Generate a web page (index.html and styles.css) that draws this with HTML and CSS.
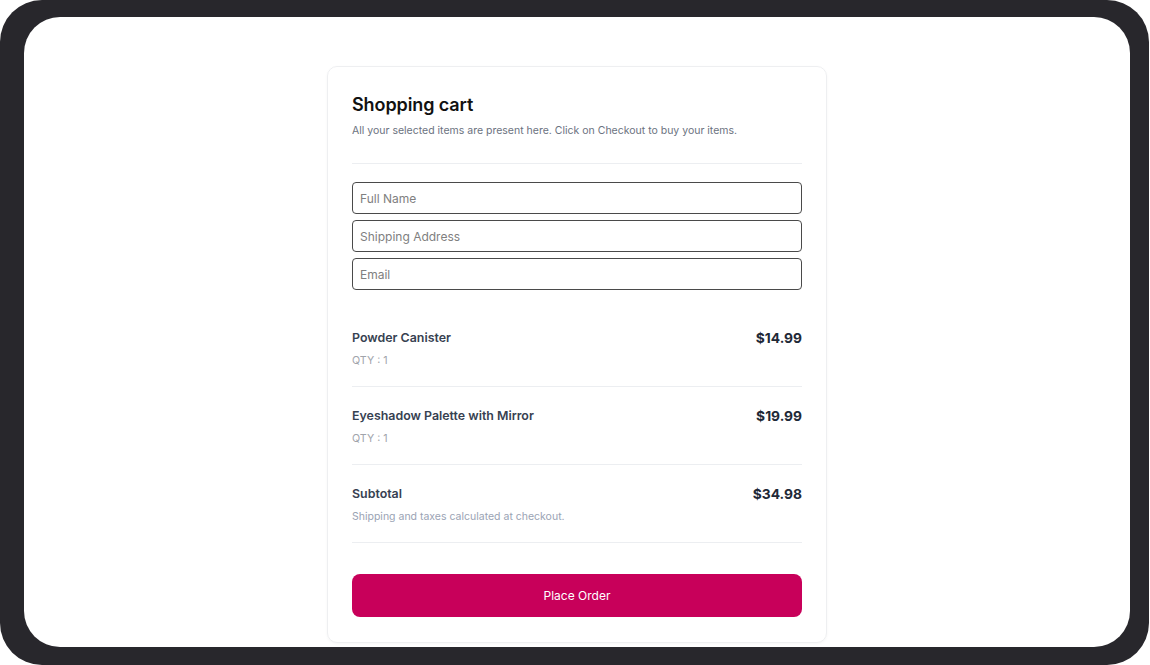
FILE: index.html
```html
<!DOCTYPE html>
<html lang="en">
<head>
<meta charset="utf-8">
<title>Shopping cart</title>
<link rel="stylesheet" href="styles.css">
</head>
<body>
<div class="frame">
  <div class="screen">
    <div class="card">
      <h1 class="title">Shopping cart</h1>
      <p class="subtitle">All your selected items are present here. Click on Checkout to buy your items.</p>
      <div class="divider"></div>
      <form class="fields">
        <input class="field" type="text" placeholder="Full Name">
        <input class="field" type="text" placeholder="Shipping Address">
        <input class="field" type="email" placeholder="Email">
      </form>
      <div class="row">
        <div class="row-main">
          <span class="name">Powder Canister</span>
          <span class="price">$14.99</span>
        </div>
        <div class="meta">QTY : 1</div>
      </div>
      <div class="row">
        <div class="row-main">
          <span class="name">Eyeshadow Palette with Mirror</span>
          <span class="price">$19.99</span>
        </div>
        <div class="meta">QTY : 1</div>
      </div>
      <div class="row">
        <div class="row-main">
          <span class="name">Subtotal</span>
          <span class="price">$34.98</span>
        </div>
        <div class="meta note">Shipping and taxes calculated at checkout.</div>
      </div>
      <button class="order" type="button">Place Order</button>
    </div>
  </div>
</div>
</body>
</html>
```

FILE: styles.css
```css
* { box-sizing: border-box; }
html, body { margin: 0; padding: 0; background: #ffffff; }
body {
  font-family: Inter, "Noto Sans", "Liberation Sans", sans-serif;
  width: 1150px;
  height: 665px;
  overflow: hidden;
}
.frame {
  width: 1149px;
  height: 665px;
  background: #28272c;
  border-radius: 42px;
  padding: 17px 19px 18px 24px;
}
.screen {
  width: 100%;
  height: 100%;
  background: #ffffff;
  border-radius: 36px;
  display: flex;
  flex-direction: column;
  align-items: center;
  padding-top: 49px;
  overflow: hidden;
}
.card {
  width: 500px;
  border: 1px solid #eeeff1;
  border-radius: 10px;
  box-shadow: 0 1px 3px rgba(0,0,0,0.04);
  padding: 24px 24px 25px 24px;
  display: flex;
  flex-direction: column;
}
.title {
  margin: 0;
  font-size: 18px;
  line-height: 28px;
  font-weight: 600;
  color: #111111;
  letter-spacing: -0.1px;
}
.subtitle {
  margin: 4px 0 0;
  font-size: 10.5px;
  line-height: 16px;
  color: #6b7280;
}
.divider {
  height: 1px;
  background: #eceef1;
  margin-top: 24px;
}
.fields {
  display: flex;
  flex-direction: column;
  gap: 6px;
  margin: 18px 0 0;
}
.field {
  height: 32px;
  width: 100%;
  border: 1px solid #4a4a4a;
  border-radius: 4px;
  padding: 0 7px;
  font-family: inherit;
  font-size: 12px;
  color: #333;
  background: #fff;
  outline: none;
}
.field::placeholder { color: #808080; }
.fields + .row { margin-top: 19px; }
.row {
  padding: 18px 0 17px;
  border-bottom: 1px solid #eceef1;
}
.row-main {
  display: flex;
  justify-content: space-between;
  align-items: center;
  height: 20px;
}
.name {
  font-size: 12.4px;
  font-weight: 600;
  color: #374151;
}
.price {
  font-size: 13.8px;
  font-weight: 700;
  color: #1f2937;
  margin-top: 2px;
}
.meta {
  margin-top: 6px;
  font-size: 10.7px;
  line-height: 16px;
  color: #a1a4ab;
}
.note { color: #9aa3b4; font-size: 10.5px; }
.order {
  margin-top: 31px;
  height: 43px;
  width: 100%;
  border: none;
  border-radius: 8px;
  background: #c8005a;
  color: #ffffff;
  font-family: inherit;
  font-size: 12px;
  font-weight: 400;
  cursor: pointer;
}
```
